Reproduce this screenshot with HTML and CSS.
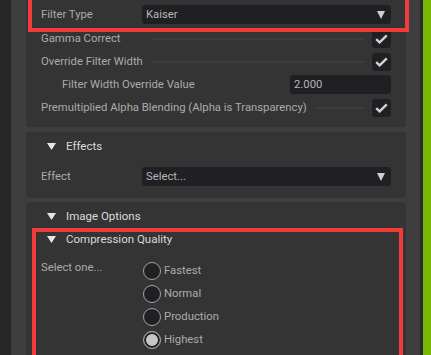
FILE: index.html
```html
<!DOCTYPE html>
<html lang="en">
<head>
    <meta charset="UTF-8">
    <meta name="viewport" content="width=device-width, initial-scale=1.0">
    <title>Property Panel</title>
    <link rel="stylesheet" href="styles.css">
</head>
<body>
    <div class="app">
        <div class="dock"></div>

        <div class="panel">
            <!-- Filter settings -->
            <div class="card card-first">
                <div class="highlight hl-filter">
                    <div class="row">
                        <span class="label">Filter Type</span>
                        <div class="combo"><span>Kaiser</span><span class="arrow"></span></div>
                    </div>
                </div>
                <div class="row">
                    <span class="label">Gamma Correct</span>
                    <span class="rule"></span>
                    <span class="check"><svg viewBox="0 0 13 10" width="13" height="10"><path d="M1.2 5.2 L4.6 8.4 L11.8 1.4" /></svg></span>
                </div>
                <div class="row">
                    <span class="label">Override Filter Width</span>
                    <span class="rule"></span>
                    <span class="check"><svg viewBox="0 0 13 10" width="13" height="10"><path d="M1.2 5.2 L4.6 8.4 L11.8 1.4" /></svg></span>
                </div>
                <div class="row">
                    <span class="label label-sub">Filter Width Override Value</span>
                    <div class="field">2.000</div>
                </div>
                <div class="row">
                    <span class="label label-wide">Premultiplied Alpha Blending (Alpha is Transparency)</span>
                    <span class="rule"></span>
                    <span class="check"><svg viewBox="0 0 13 10" width="13" height="10"><path d="M1.2 5.2 L4.6 8.4 L11.8 1.4" /></svg></span>
                </div>
            </div>

            <!-- Effects -->
            <div class="card">
                <div class="header"><svg class="tri" viewBox="0 0 9 7" width="9" height="7"><polygon points="0,0 9,0 4.5,7" /></svg>Effects</div>
                <div class="row row-effect">
                    <span class="label">Effect</span>
                    <div class="combo"><span>Select...</span><span class="arrow"></span></div>
                </div>
            </div>

            <!-- Image options -->
            <div class="card">
                <div class="header"><svg class="tri" viewBox="0 0 9 7" width="9" height="7"><polygon points="0,0 9,0 4.5,7" /></svg>Image Options</div>
                <div class="highlight subframe">
                    <div class="header header-sub"><svg class="tri" viewBox="0 0 9 7" width="9" height="7"><polygon points="0,0 9,0 4.5,7" /></svg>Compression Quality</div>
                    <div class="choice">
                        <span class="label">Select one...</span>
                        <div class="radios">
                            <div class="radio-row"><span class="radio"></span>Fastest</div>
                            <div class="radio-row"><span class="radio"></span>Normal</div>
                            <div class="radio-row"><span class="radio"></span>Production</div>
                            <div class="radio-row"><span class="radio on"></span>Highest</div>
                        </div>
                    </div>
                </div>
            </div>
        </div>

        <div class="edge"></div>
        <div class="accent"></div>
    </div>
</body>
</html>
```

FILE: styles.css
```css
body {
    margin: 0;
    background-color: #272727;
    font-family: 'Roboto', 'Liberation Sans', sans-serif;
    font-size: 11.3px;
    color: #ababab;
}

.app {
    display: flex;
    height: 355px;
    overflow: hidden;
}

.dock {
    width: 11px;
    background-color: #272727;
}

.panel {
    flex: 1;
    background-color: #3e3e3e;
    padding: 0 14px 0 15px;
}

.edge {
    width: 3px;
    background-color: #2b2b2b;
}

.accent {
    width: 8px;
    background-color: #76b900;
}

.card {
    background-color: #343434;
    border-radius: 4px;
    padding: 4px 15px 10px 15px;
    margin-bottom: 4px;
}

/* the list is scrolled a little, the first card starts above the view */
.card-first {
    margin-top: -14px;
    padding-bottom: 10px;
    margin-bottom: 5px;
}

.highlight {
    outline: 4px solid #f23c3c;
}

.hl-filter {
    margin: 0 -14px 0 -9px;
    padding: 15px 14px 4px 9px;
}

.row {
    display: flex;
    align-items: center;
    height: 19px;
    margin-top: 4px;
}

.hl-filter .row {
    margin-top: 0;
}

.hl-filter + .row {
    margin-top: 1px;
}

.label {
    width: 101px;
    flex-shrink: 0;
    white-space: nowrap;
}

.label-sub {
    padding-left: 21px;
    width: auto;
    flex: 1;
}

.label-wide {
    width: auto;
}

.rule {
    flex: 1;
    height: 2px;
    background-color: #3c3c3c;
    margin: 0 7px 0 9px;
}

.combo,
.field {
    flex: 1;
    height: 19px;
    background-color: #1f2023;
    border-radius: 3px;
    display: flex;
    align-items: center;
    justify-content: space-between;
    padding: 0 6px 0 4px;
    color: #b6b6b6;
}

.field {
    flex: 0 0 101px;
    box-sizing: border-box;
}

.arrow {
    width: 0;
    height: 0;
    border-left: 4.5px solid transparent;
    border-right: 4.5px solid transparent;
    border-top: 8px solid #cfcfcf;
}

.check {
    width: 19px;
    height: 18px;
    background-color: #1f2023;
    border-radius: 3px;
    display: flex;
    align-items: center;
    justify-content: center;
}

.check path {
    fill: none;
    stroke: #d2d2d2;
    stroke-width: 2.4;
}

.header {
    display: flex;
    align-items: center;
    height: 20px;
    padding-left: 6px;
    color: #dadada;
    font-size: 11.5px;
}

.tri {
    margin-right: 10px;
}

.tri polygon {
    fill: #e6e6e6;
}

.row-effect {
    margin-top: 11px;
    margin-bottom: 2px;
}

.subframe {
    margin: 6px -8px 0 -5px;
    padding: 0 8px 10px 5px;
    min-height: 120px;
}

.header-sub {
    height: 14px;
}

.choice {
    display: flex;
    margin-top: 15px;
}

.choice .label {
    padding-top: 0;
}

.radios {
    margin-left: 1px;
    display: flex;
    flex-direction: column;
    gap: 4px;
}

.radio-row {
    display: flex;
    align-items: center;
    height: 19px;
}

.radio {
    width: 16px;
    height: 16px;
    border: 1.5px solid #a3a3a3;
    border-radius: 50%;
    background-color: #1f2023;
    margin-right: 3px;
}

.radio.on {
    background-color: #c6c6c6;
    box-shadow: inset 0 0 0 2px #1f2023;
}
```
